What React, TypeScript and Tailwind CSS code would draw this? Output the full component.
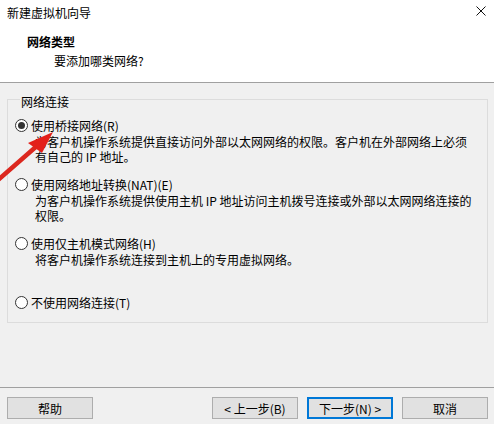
import React from 'react';

const font = { fontFamily: '"Noto Sans CJK SC", "Noto Sans", sans-serif' };

const Radio: React.FC<{ checked?: boolean }> = ({ checked }) => (
  <span className="w-[13px] h-[13px] rounded-full border border-[#333333] bg-white flex items-center justify-center shrink-0">
    {checked && <span className="w-[7px] h-[7px] rounded-full bg-[#333333]" />}
  </span>
);

const Option: React.FC<{ label: string; lines: string[]; checked?: boolean }> = ({ label, lines, checked }) => (
  <div className="h-[59px]">
    <div className="flex items-center gap-[3px] h-[15px]">
      <Radio checked={checked} />
      <span className="leading-[15px] whitespace-nowrap">{label}</span>
    </div>
    <div className="pl-[20px] pt-[1px]">
      {lines.map((l) => (
        <div key={l} className="leading-[15px] whitespace-nowrap">{l}</div>
      ))}
    </div>
  </div>
);

const Button: React.FC<{ children: React.ReactNode; primary?: boolean }> = ({ children, primary }) => (
  <button
    className={`w-[86px] h-[22px] bg-[#e1e1e1] text-[12px] leading-[15px] text-black flex items-center justify-center ${
      primary ? 'border-2 border-[#0078d7]' : 'border border-[#adadad]'
    }`}
  >
    {children}
  </button>
);

const App: React.FC = () => {
  return (
    <div className="w-[494px] h-[424px] bg-[#f0f0f0] flex flex-col relative text-[12px] text-black overflow-hidden" style={font}>
      <div className="bg-white h-[83px] border-b border-[#a0a0a0] shrink-0">
        <div className="flex items-center justify-between h-[24px] pl-[7px] pr-[8px]">
          <span className="leading-[15px]">新建虚拟机向导</span>
          <svg width="10" height="10" viewBox="0 0 10 10" className="-mt-[3px]">
            <path d="M0.5 0.5 L9.5 9.5 M9.5 0.5 L0.5 9.5" stroke="#111" strokeWidth="1" fill="none" />
          </svg>
        </div>
        <div className="pl-[27px] mt-[10px] font-bold leading-[15px]">网络类型</div>
        <div className="pl-[54px] mt-[4px] leading-[15px]">要添加哪类网络?</div>
      </div>

      <div className="flex-1 px-[7px] pt-[7px]">
        <fieldset className="border border-[#dcdcdc] w-[481px] h-[233px] px-[7px]">
          <legend className="ml-[5px] px-[1px] pt-[4px] leading-[15px]">网络连接</legend>
          <div className="pt-[9px]">
            <Option
              checked
              label="使用桥接网络(R)"
              lines={['为客户机操作系统提供直接访问外部以太网网络的权限。客户机在外部网络上必须', '有自己的 IP 地址。']}
            />
            <Option
              label="使用网络地址转换(NAT)(E)"
              lines={['为客户机操作系统提供使用主机 IP 地址访问主机拨号连接或外部以太网网络连接的', '权限。']}
            />
            <Option label="使用仅主机模式网络(H)" lines={['将客户机操作系统连接到主机上的专用虚拟网络。']} />
            <Option label="不使用网络连接(T)" lines={[]} />
          </div>
        </fieldset>
      </div>

      <div className="h-[37px] border-t border-[#a0a0a0] shrink-0 flex items-start pt-[9px] pl-[7px] pr-[6px]">
        <Button>帮助</Button>
        <div className="flex-1" />
        <div className="flex gap-[9px]">
          <Button>&lt; 上一步(B)</Button>
          <Button primary>下一步(N) &gt;</Button>
          <Button>取消</Button>
        </div>
      </div>

      <svg className="absolute left-0 top-[125px] pointer-events-none" width="60" height="60" viewBox="0 0 60 60">
        <defs>
          <linearGradient id="ar" x1="0" y1="0" x2="1" y2="1">
            <stop offset="0" stopColor="#f03a2e" />
            <stop offset="1" stopColor="#c8140e" />
          </linearGradient>
        </defs>
        <line x1="38" y1="20" x2="-3" y2="56" stroke="url(#ar)" strokeWidth="4.5" strokeLinecap="round" />
        <polygon points="53,7 28,18 42,28" fill="#e3201a" />
      </svg>
    </div>
  );
};

export default App;
